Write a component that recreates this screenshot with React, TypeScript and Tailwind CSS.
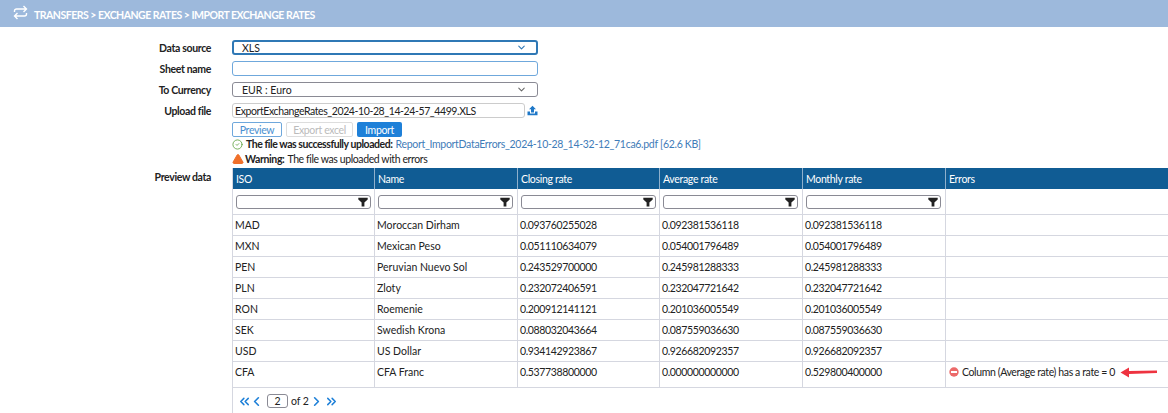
import React from "react";
import { ChevronDown, ChevronLeft, ChevronRight, ChevronsLeft, ChevronsRight, CircleCheck, TriangleAlert } from "lucide-react";

const rows = [
  ["MAD", "Moroccan Dirham", "0.093760255028", "0.092381536118", "0.092381536118"],
  ["MXN", "Mexican Peso", "0.051110634079", "0.054001796489", "0.054001796489"],
  ["PEN", "Peruvian Nuevo Sol", "0.243529700000", "0.245981288333", "0.245981288333"],
  ["PLN", "Zloty", "0.232072406591", "0.232047721642", "0.232047721642"],
  ["RON", "Roemenie", "0.200912141121", "0.201036005549", "0.201036005549"],
  ["SEK", "Swedish Krona", "0.088032043664", "0.087559036630", "0.087559036630"],
  ["USD", "US Dollar", "0.934142923867", "0.926682092357", "0.926682092357"],
  ["CFA", "CFA Franc", "0.537738800000", "0.000000000000", "0.529800400000"],
];
const heads = ["ISO", "Name", "Closing rate", "Average rate", "Monthly rate"];

function Funnel() {
  return (
    <svg width="10" height="10" viewBox="0 0 10 10" className="absolute right-[2px] top-[1px]">
      <path d="M0.3 0.8h9.4v1.6L6.4 5.4V9.6H3.6V5.4L0.3 2.4z" fill="#222" />
    </svg>
  );
}

function Row({ label, children }: { label: string; children: React.ReactNode }) {
  return (
    <div className="flex h-[21px] items-center">
      <div className="w-[211px] text-right font-bold tracking-[-0.35px] text-[#222]">{label}</div>
      <div className="ml-[21px] flex items-center">{children}</div>
    </div>
  );
}

export default function App() {
  return (
    <div className="h-[413px] w-[1168px] overflow-hidden bg-white text-[10.5px] leading-[14px] text-[#333] [font-family:Lato,'Open_Sans',sans-serif]">
      <div className="flex h-[27px] items-center bg-[#9db9dc] pl-[13px] text-white">
        <svg width="15" height="15" viewBox="0 0 15 15" fill="none" stroke="#fff" strokeWidth="1.4" className="mb-[3px]">
          <path d="M1.5 7V6a2 2 0 0 1 2-2H13.5M10.5 1L13.5 4L10.5 7" />
          <path d="M13.5 8V9a2 2 0 0 1-2 2H1.5M4.5 8L1.5 11L4.5 14" />
        </svg>
        <span className="ml-[6px] pt-[3px] text-[10.5px] font-bold tracking-[-0.5px]">TRANSFERS &gt; EXCHANGE RATES &gt; IMPORT EXCHANGE RATES</span>
      </div>
      <div className="pt-[10px]">
        <Row label="Data source">
          <div className="flex h-[15px] w-[306px] items-center justify-between rounded-[3px] border-2 border-[#2f78b5] pl-[8px] pr-[9px] text-[#222]">
            XLS <ChevronDown size={11} strokeWidth={2.4} className="text-[#2f78b5]" />
          </div>
        </Row>
        <Row label="Sheet name">
          <div className="h-[15px] w-[306px] rounded-[3px] border border-[#6fa8dc]" />
        </Row>
        <Row label="To Currency">
          <div className="flex h-[15px] w-[306px] items-center justify-between rounded-[3px] border border-[#8a8a94] pl-[9px] pr-[10px] text-[#222]">
            EUR : Euro <ChevronDown size={11} strokeWidth={2.2} className="text-[#666]" />
          </div>
        </Row>
        <Row label="Upload file">
          <div className="flex h-[15px] w-[293px] items-center whitespace-nowrap rounded-[3px] border border-[#ccc] pl-[2px] tracking-[-0.4px] text-[#222]">ExportExchangeRates_2024-10-28_14-24-57_4499.XLS</div>
          <svg width="11" height="11" viewBox="0 0 11 10" className="ml-[2px]">
            <path d="M5.5 0.3L9 3.8H7V7H4V3.8H2z M0.5 6h2.5v2h5V6h2.5v3.7h-10z" fill="#1f78c8" />
          </svg>
        </Row>
        <div className="ml-[232px] mt-[1px] flex h-[15px] gap-[4px] tracking-[-0.35px]">
          <div className="flex w-[50px] items-center justify-center rounded-[2px] border border-[#6fa8dc] text-[#4a8fd0]">Preview</div>
          <div className="flex w-[67px] items-center justify-center rounded-[2px] border border-[#ddd] text-[#bbb]">Export excel</div>
          <div className="flex w-[45px] items-center justify-center rounded-[2px] bg-[#1e80d8] text-white">Import</div>
        </div>
        <div className="ml-[232px] flex h-[14px] items-center whitespace-nowrap text-[#222]">
          <CircleCheck size={11} className="mr-[3px] text-[#6aa84f]" />
          <b className="tracking-[-0.45px]">The file was successfully uploaded:</b>
          <span className="ml-[3px] tracking-[-0.3px] text-[#3f7cb8]">Report_ImportDataErrors_2024-10-28_14-32-12_71ca6.pdf [62.6 KB]</span>
        </div>
        <div className="flex h-[15px] items-center whitespace-nowrap pl-[232px] text-[#222]">
          <TriangleAlert size={12} fill="#f0702a" stroke="#f0702a" className="mr-[1px]" />
          <b className="tracking-[-0.37px]">Warning:</b>
          <span className="ml-[3px] tracking-[-0.4px]">The file was uploaded with errors</span>
        </div>
        <div className="mt-[2px] flex">
          <div className="w-[211px] pt-[2px] text-right font-bold tracking-[-0.35px] text-[#222]">Preview data</div>
          <div className="ml-[21px] w-[936px]">
            <div className="grid grid-cols-[142px_143px_142px_143px_143px_223px] border-l border-[#d5d7e0]">
              {heads.concat("Errors").map((h) => (
                <div key={h} className="flex h-[21px] items-center border-r border-[#8fb0cc] bg-[#105c94] pl-[3px] tracking-[-0.32px] text-white">{h}</div>
              ))}
              {heads.map((h) => (
                <div key={h} className="flex h-[26px] items-center border-b border-r border-[#d5d7e0] px-[3px] pt-[1px]">
                  <div className="relative h-[14px] w-[135px] rounded-[3px] border border-[#8a8a94]"><Funnel /></div>
                </div>
              ))}
              <div className="h-[26px] border-b border-[#d5d7e0]" />
              {rows.map((r, i) => (
                <React.Fragment key={r[0]}>
                  {r.map((c, j) => (
                    <div key={j} className={`flex items-center border-b border-r border-[#d5d7e0] pl-[2px] text-[#222] ${j > 1 ? "tracking-[-0.35px]" : ""} ${i === 7 ? "h-[26px] pb-[5px]" : "h-[21px]"}`}>{c}</div>
                  ))}
                  <div className={`flex items-center whitespace-nowrap border-b border-[#d5d7e0] pl-[3px] text-[#222] ${i === 7 ? "h-[26px] pb-[5px]" : "h-[21px]"}`}>
                    {i === 7 && (
                      <>
                        <svg width="10" height="10" viewBox="0 0 10 10" className="mr-[3px] shrink-0"><circle cx="5" cy="5" r="4.7" fill="#ec6a6a" /><rect x="2" y="4" width="6" height="2" fill="#fff" /></svg>
                        <span className="tracking-[-0.38px]">Column (Average rate) has a rate = 0</span>
                        <svg width="38" height="12" viewBox="0 0 38 12" className="ml-[5px] shrink-0">
                          <path d="M0.5 6.5L9 1.5V5L37 4.5V7L9 8V11.5z" fill="#ee3340" />
                        </svg>
                      </>
                    )}
                  </div>
                </React.Fragment>
              ))}
            </div>
            <div className="flex h-[26px] items-center border-l border-[#d5d7e0] pl-[4px] text-[#222]">
              <ChevronsLeft size={15} strokeWidth={2.4} className="text-[#1e80d8]" />
              <ChevronLeft size={15} strokeWidth={2.6} className="ml-[-3px] text-[#1e80d8]" />
              <div className="ml-[3px] mr-[3px] flex h-[14px] w-[21px] items-center justify-center rounded-[3px] border border-[#8a8a94]">2</div>
              <span className="tracking-[-0.1px]">of 2</span>
              <ChevronRight size={15} strokeWidth={2.6} className="text-[#1e80d8]" />
              <ChevronsRight size={15} strokeWidth={2.4} className="text-[#1e80d8]" />
            </div>
          </div>
        </div>
      </div>
    </div>
  );
}
